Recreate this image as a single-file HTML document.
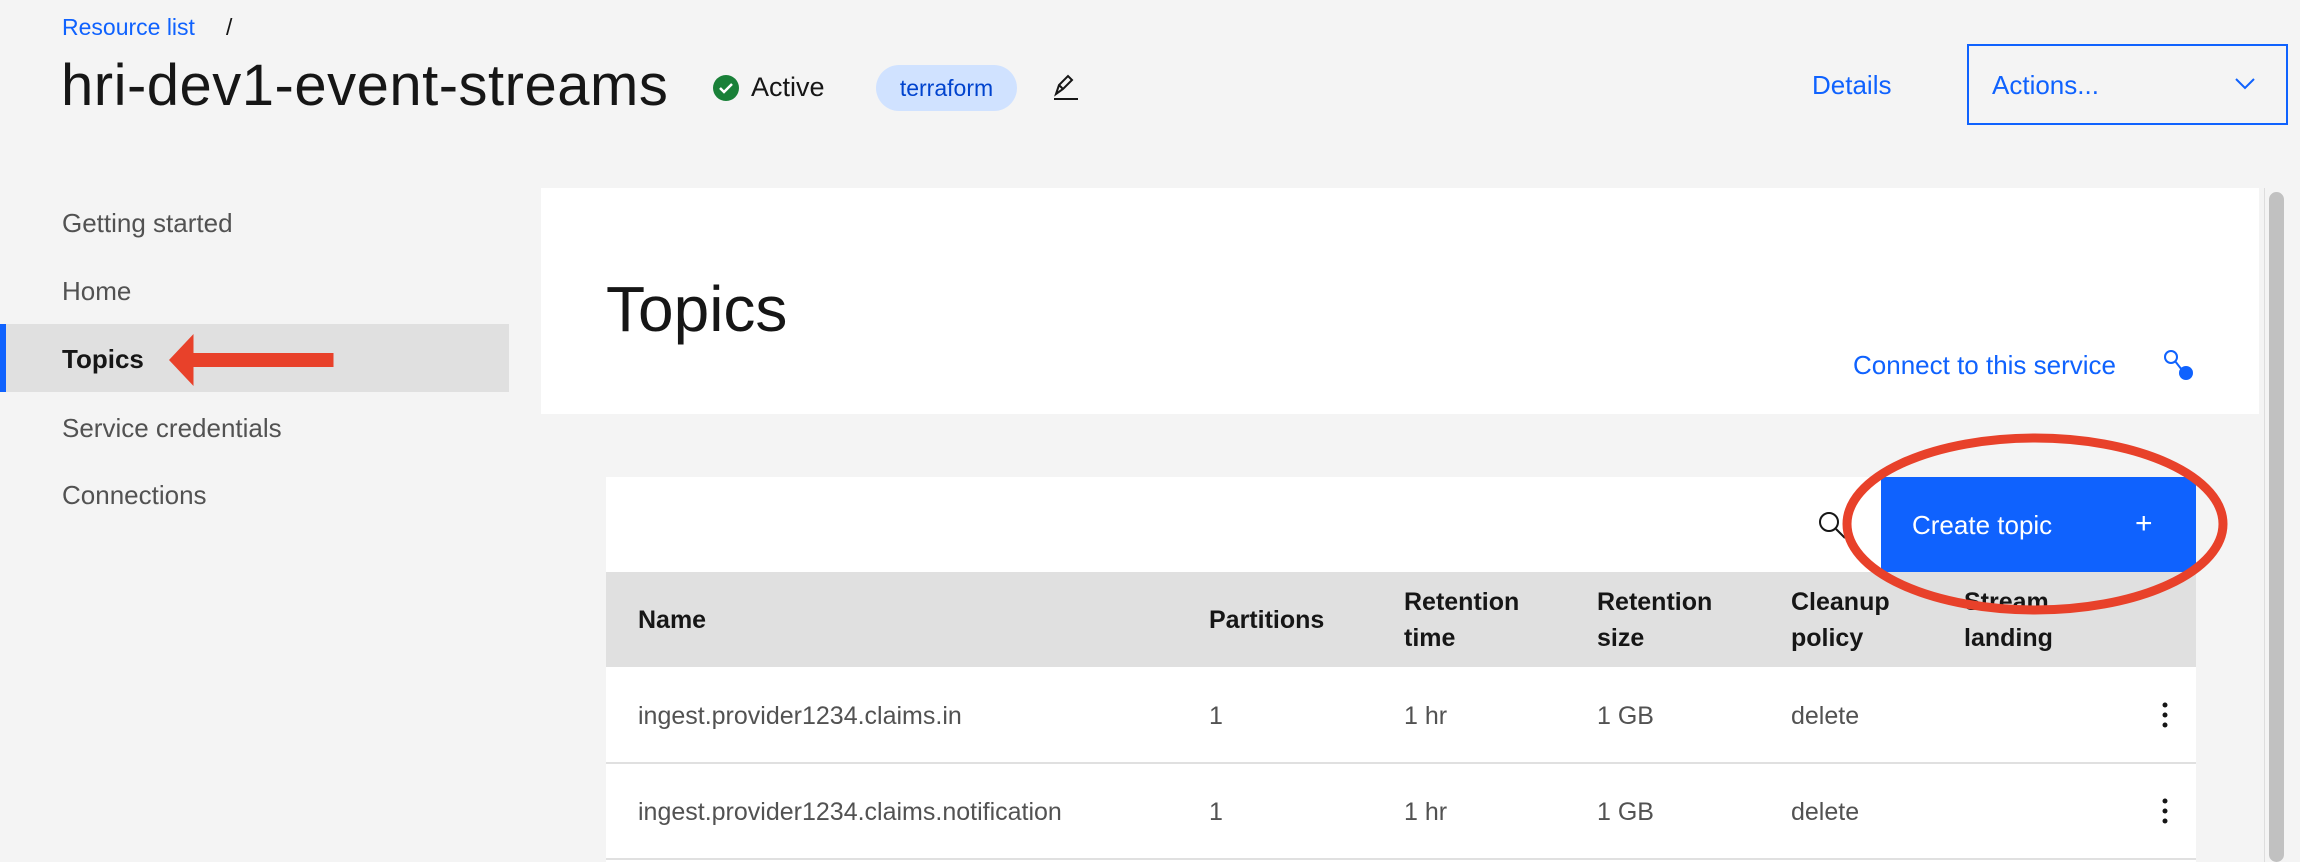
<!DOCTYPE html>
<html><head><meta charset="utf-8"><style>
*{margin:0;padding:0;box-sizing:border-box}
body{width:2300px;height:862px;background:#f4f4f4;font-family:"Liberation Sans",sans-serif;color:#161616;position:relative;overflow:hidden}
.a{position:absolute;white-space:nowrap}
.blue{color:#0f62fe}
.nav{font-size:26px;color:#525252;left:62px}
.hd{font-size:25px;font-weight:bold;line-height:36px}
.cell{font-size:25px;color:#525252}
</style></head><body>
<div class="a blue" style="left:62px;top:14px;font-size:23px">Resource list</div>
<div class="a" style="left:226px;top:14px;font-size:23px;color:#161616">/</div>
<div class="a" style="left:61px;top:52px;font-size:58px;letter-spacing:0.5px">hri-dev1-event-streams</div>
<svg class="a" style="left:712px;top:74px" width="28" height="28"><circle cx="14" cy="14" r="13" fill="#198038"/><path d="M8 14l4 4 8-8" stroke="#fff" stroke-width="2.5" fill="none"/></svg>
<div class="a" style="left:751px;top:72px;font-size:27px">Active</div>
<div class="a" style="left:876px;top:65px;width:141px;height:46px;border-radius:23px;background:#d0e2ff;color:#0043ce;font-size:23px;text-align:center;line-height:46px">terraform</div>
<svg class="a" style="left:1050px;top:72px" width="32" height="32"><path d="M6 22l3-9 9-9 4 4-9 9-7 5zM9 13l4 4M4 27h24" stroke="#161616" stroke-width="2" fill="none"/></svg>
<div class="a blue" style="left:1812px;top:70px;font-size:26px">Details</div>
<div class="a" style="left:1967px;top:44px;width:321px;height:81px;border:2px solid #0f62fe"></div>
<div class="a blue" style="left:1992px;top:70px;font-size:26px">Actions...</div>
<svg class="a" style="left:2234px;top:76px" width="22" height="16"><path d="M2 3l9 9 9-9" stroke="#0f62fe" stroke-width="2" fill="none"/></svg>

<div class="a nav" style="top:208px">Getting started</div>
<div class="a nav" style="top:276px">Home</div>
<div class="a" style="left:0;top:324px;width:509px;height:68px;background:#e0e0e0;border-left:6px solid #0f62fe"></div>
<div class="a nav" style="top:344px;color:#161616;font-weight:bold">Topics</div>
<svg class="a" style="left:165px;top:330px" width="180" height="60"><path d="M8 30L57 4v19h280v14H57v19z" fill="#e8412a" transform="scale(0.5,1)"/></svg>
<div class="a nav" style="top:413px">Service credentials</div>
<div class="a nav" style="top:480px">Connections</div>

<div class="a" style="left:541px;top:188px;width:1718px;height:226px;background:#fff"></div>
<div class="a" style="left:606px;top:272px;font-size:64px">Topics</div>
<div class="a blue" style="left:1853px;top:350px;font-size:26px">Connect to this service</div>
<svg class="a" style="left:2162px;top:348px" width="36" height="36"><circle cx="9" cy="9" r="6" stroke="#0f62fe" stroke-width="2" fill="none"/><line x1="13" y1="13" x2="20" y2="22" stroke="#0f62fe" stroke-width="2"/><circle cx="24" cy="25" r="7" fill="#0f62fe"/></svg>
<div class="a" style="left:2264px;top:188px;width:26px;height:674px;background:#f4f4f4;border-left:1px solid #ddd"></div>
<div class="a" style="left:2269px;top:192px;width:15px;height:670px;background:#c1c1c1;border-radius:8px"></div>

<div class="a" style="left:606px;top:477px;width:1590px;height:385px;background:#fff"></div>
<svg class="a" style="left:1817px;top:510px" width="30" height="30"><circle cx="12" cy="12" r="9" stroke="#161616" stroke-width="2" fill="none"/><line x1="19" y1="19" x2="28" y2="28" stroke="#161616" stroke-width="2"/></svg>
<div class="a" style="left:1881px;top:477px;width:315px;height:95px;background:#0f62fe"></div>
<div class="a" style="left:1912px;top:510px;font-size:26px;color:#fff">Create topic</div>
<div class="a" style="left:2135px;top:507px;font-size:30px;color:#fff">+</div>
<div class="a" style="left:606px;top:572px;width:1590px;height:95px;background:#e0e0e0"></div>
<div class="a hd" style="left:638px;top:602px">Name</div>
<div class="a hd" style="left:1209px;top:602px">Partitions</div>
<div class="a hd" style="left:1404px;top:584px">Retention<br>time</div>
<div class="a hd" style="left:1597px;top:584px">Retention<br>size</div>
<div class="a hd" style="left:1791px;top:584px">Cleanup<br>policy</div>
<div class="a hd" style="left:1964px;top:584px">Stream<br>landing</div>
<div class="a" style="left:606px;top:762px;width:1590px;height:2px;background:#e0e0e0"></div>
<div class="a" style="left:606px;top:858px;width:1590px;height:2px;background:#e0e0e0"></div>
<div class="a cell" style="left:638px;top:702px">ingest.provider1234.claims.in</div>
<div class="a cell" style="left:1209px;top:702px">1</div>
<div class="a cell" style="left:1404px;top:702px">1 hr</div>
<div class="a cell" style="left:1597px;top:702px">1 GB</div>
<div class="a cell" style="left:1791px;top:702px">delete</div>
<div class="a cell" style="left:638px;top:798px">ingest.provider1234.claims.notification</div>
<div class="a cell" style="left:1209px;top:798px">1</div>
<div class="a cell" style="left:1404px;top:798px">1 hr</div>
<div class="a cell" style="left:1597px;top:798px">1 GB</div>
<div class="a cell" style="left:1791px;top:798px">delete</div>
<svg class="a" style="left:2158px;top:700px" width="14" height="30"><circle cx="7" cy="5" r="2.5" fill="#161616"/><circle cx="7" cy="15" r="2.5" fill="#161616"/><circle cx="7" cy="25" r="2.5" fill="#161616"/></svg>
<svg class="a" style="left:2158px;top:796px" width="14" height="30"><circle cx="7" cy="5" r="2.5" fill="#161616"/><circle cx="7" cy="15" r="2.5" fill="#161616"/><circle cx="7" cy="25" r="2.5" fill="#161616"/></svg>
<svg class="a" style="left:0;top:0" width="2300" height="862"><ellipse cx="2035" cy="524" rx="188" ry="86" stroke="#e8412a" stroke-width="9" fill="none"/></svg>
</body></html>
